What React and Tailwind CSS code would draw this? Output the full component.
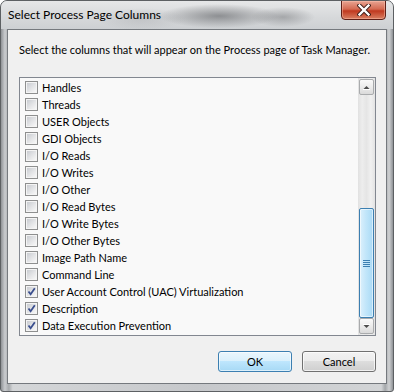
const columns = [
  { label: "Handles", checked: false },
  { label: "Threads", checked: false },
  { label: "USER Objects", checked: false },
  { label: "GDI Objects", checked: false },
  { label: "I/O Reads", checked: false },
  { label: "I/O Writes", checked: false },
  { label: "I/O Other", checked: false },
  { label: "I/O Read Bytes", checked: false },
  { label: "I/O Write Bytes", checked: false },
  { label: "I/O Other Bytes", checked: false },
  { label: "Image Path Name", checked: false },
  { label: "Command Line", checked: false },
  { label: "User Account Control (UAC) Virtualization", checked: true },
  { label: "Description", checked: true },
  { label: "Data Execution Prevention", checked: true },
];

function CheckBox({ checked }) {
  return (
    <div className="w-[13px] h-[13px] shrink-0 border border-[#8e8f8f] bg-[#f4f4f4] p-[1px]">
      <div className="relative w-full h-full bg-[linear-gradient(135deg,#c9ccd1,#e4e5e7_55%,#f7f7f7)]">
        {checked && (
          <svg width="11" height="11" viewBox="0 0 11 11" className="absolute -left-[1px] -top-[1px]">
            <path d="M2.5 5.5 L4.6 8.2 L8.8 2.2" fill="none" stroke="#3b4f8e" strokeWidth="1.8" />
          </svg>
        )}
      </div>
    </div>
  );
}

function ScrollArrow({ up }) {
  return (
    <div className="mx-[1px] h-[16px] rounded-[2px] border border-[#a9abad] bg-[linear-gradient(#fafafa,#ececec_50%,#dadada)] flex items-center justify-center">
      <svg width="7" height="5" viewBox="0 0 7 5">
        {up ? (
          <>
            <path d="M0.5 4 L3.5 1 L6.5 4 Z" fill="#4d4d4d" />
            <path d="M0 4.5 H7" stroke="#ffffff" strokeWidth="1" />
          </>
        ) : (
          <>
            <path d="M0.5 1 L3.5 4 L6.5 1 Z" fill="#4d4d4d" />
            <path d="M0 0.5 H7" stroke="#ffffff" strokeWidth="1" />
          </>
        )}
      </svg>
    </div>
  );
}

export default function App() {
  return (
    <div className="w-[394px] h-[392px] bg-white font-['Lato',sans-serif] text-black">
      <div className="w-[394px] h-[392px] flex flex-col border border-[#5d6063] rounded-t-[7px] rounded-b-[3px] overflow-hidden bg-[linear-gradient(to_right,#8f9296,#c9cbce_1%,#a7aaad_2%,#d4d6d8_3%,#c6c8cb_50%,#d2d4d6_97%,#a4a7aa_98%,#cfd1d3_99%,#8f9296)]">
        <div className="h-[28px] shrink-0 flex items-start bg-[radial-gradient(ellipse_60px_12px_at_218px_15px,rgba(80,82,86,0.55),transparent),radial-gradient(ellipse_32px_10px_at_282px_16px,rgba(90,92,96,0.4),transparent),radial-gradient(ellipse_45px_11px_at_140px_18px,rgba(150,152,156,0.3),transparent),linear-gradient(#e6e7e8,#d6d8da_60%,#cdd0d3)]">
          <span className="ml-[7px] mt-[6px] text-[12px] leading-[16px]">Select Process Page Columns</span>
          <div className="ml-auto mr-[7px] -mt-[1px] w-[45px] h-[20px] rounded-b-[4px] border border-[#5e1f17] bg-[linear-gradient(#e8a492,#d46a52_45%,#c0391f_55%,#d97f62)] shadow-[inset_0_0_0_1px_rgba(255,200,180,0.45)] flex items-center justify-center">
            <svg width="14" height="12" viewBox="0 0 14 12">
              <path d="M2.5 1.5 L11.5 10.5 M11.5 1.5 L2.5 10.5" stroke="#3b1d18" strokeWidth="4.2" strokeLinecap="square" />
              <path d="M2.5 1.5 L11.5 10.5 M11.5 1.5 L2.5 10.5" stroke="#ffffff" strokeWidth="2.4" strokeLinecap="square" />
            </svg>
          </div>
        </div>

        <div className="flex-1 px-[6px] pb-[7px] flex flex-col">
          <div className="flex-1 flex flex-col border border-[#75797e] bg-[#f0f0f0]">
            <p className="ml-[11px] mt-[12px] text-[11px] leading-[15px]">
              Select the columns that will appear on the Process page of Task Manager.
            </p>

            <div className="ml-[11px] mt-[20px] w-[357px] h-[259px] border border-[#828790] bg-[#f9f9f9] flex">
              <div className="flex-1 pt-[1px] pl-[5px] flex flex-col">
                {columns.map((c) => (
                  <div key={c.label} className="h-[17px] flex items-center gap-[4px]">
                    <CheckBox checked={c.checked} />
                    <span className="text-[11px] leading-[15px] -mt-[1px] whitespace-nowrap">{c.label}</span>
                  </div>
                ))}
              </div>

              <div className="w-[17px] flex flex-col pt-[1px] bg-[linear-gradient(to_right,#e1e1e1,#ededed_25%,#e5e5e5_50%,#f0f0f0_75%,#e3e3e3)]">
                <ScrollArrow up />
                <div className="flex-1 flex flex-col justify-end mx-[1px]">
                  <div className="h-[110px] rounded-[2px] border border-[#3c7fb1] bg-[linear-gradient(to_right,#dcf0fc,#c2e6fa_45%,#a9daf6)] shadow-[inset_0_0_0_1px_rgba(255,255,255,0.55)] flex flex-col items-center justify-center gap-[1px]">
                    <div className="w-[7px] h-[1px] bg-[#3c7fb1]" />
                    <div className="w-[7px] h-[1px] bg-[#3c7fb1]" />
                    <div className="w-[7px] h-[1px] bg-[#3c7fb1]" />
                    <div className="w-[7px] h-[1px] bg-[#3c7fb1]" />
                  </div>
                </div>
                <div className="mb-[1px]">
                  <ScrollArrow />
                </div>
              </div>
            </div>

            <div className="mt-[15px] mr-[10px] flex justify-end gap-[10px]">
              <button className="w-[74px] h-[21px] rounded-[3px] border border-[#3c7fb1] bg-[linear-gradient(#eaf6fd,#d9f0fc_50%,#bee6fd_50%,#a7d9f5)] shadow-[inset_0_0_0_1px_rgba(255,255,255,0.6)] text-[11px] leading-[15px]">
                OK
              </button>
              <button className="w-[74px] h-[21px] rounded-[3px] border border-[#707070] bg-[linear-gradient(#f2f2f2,#ebebeb_50%,#dddddd_50%,#cfcfcf)] shadow-[inset_0_0_0_1px_rgba(255,255,255,0.7)] text-[11px] leading-[15px]">
                Cancel
              </button>
            </div>
          </div>
        </div>
      </div>
    </div>
  );
}
